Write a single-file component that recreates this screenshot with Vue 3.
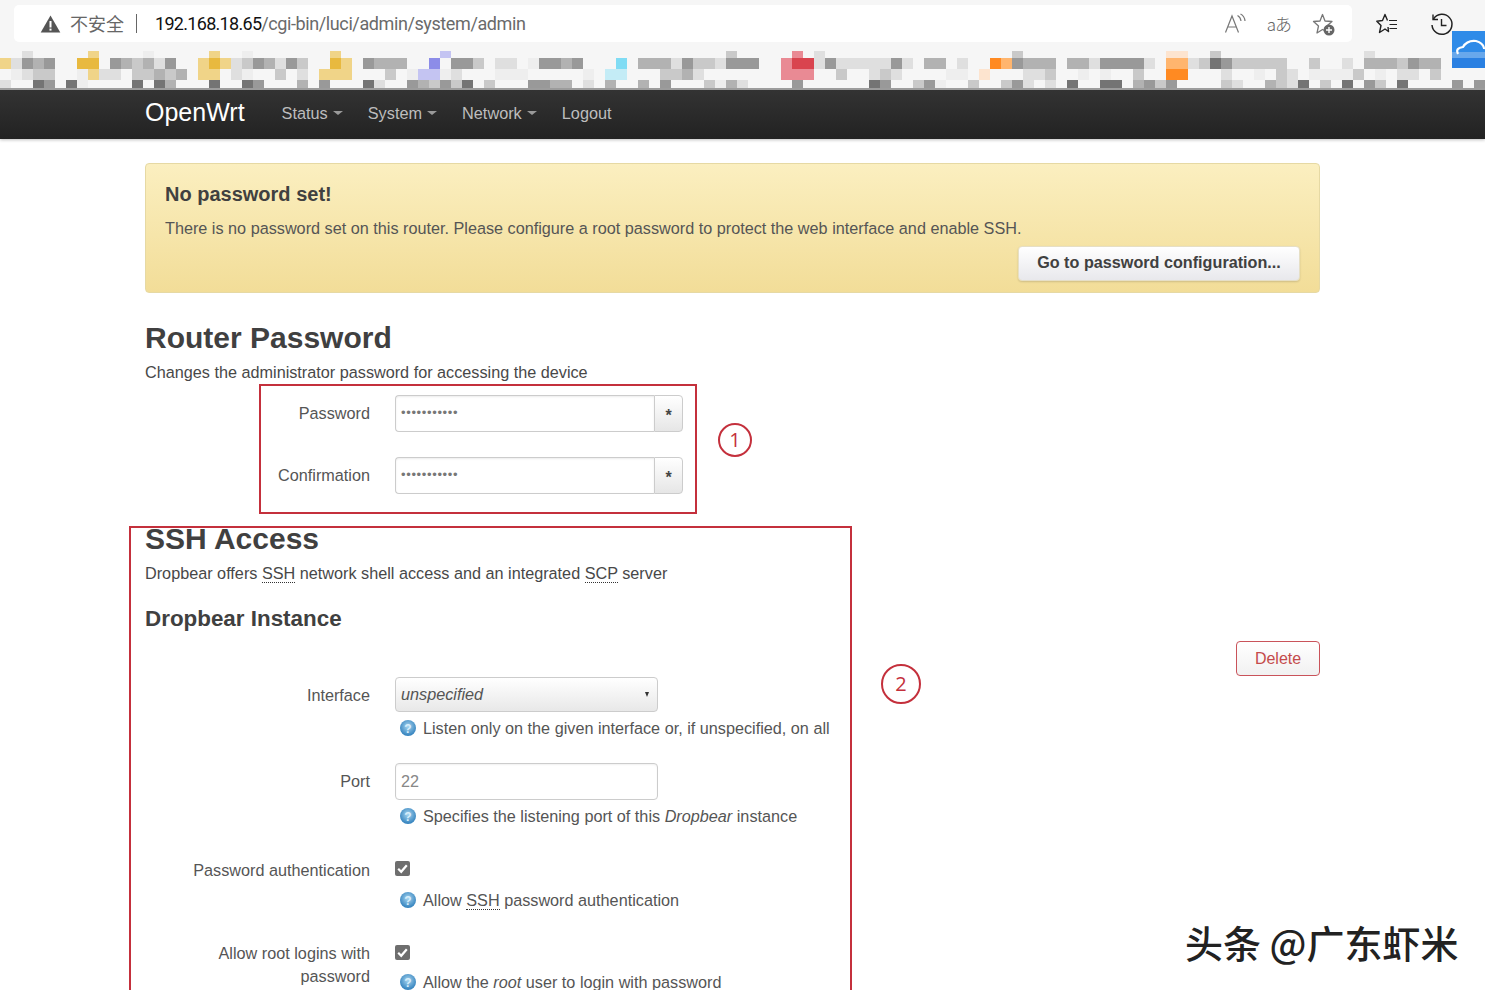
<script setup>
const palette = {
  1: '#eeeeee', 2: '#dfdfdf', 3: '#c9c9c9', 4: '#b2b2b2', 5: '#999999', 6: '#747474',
  y: '#f0d488', Y: '#e8b93f', p: '#8c8ce8', q: '#c4c4f2', c: '#80dcf4', C: '#c4ecf6',
  r: '#d9444f', R: '#e98a94', o: '#ff8a22', O: '#ffb56e', s: '#fde4cf'
}
const rowData = [
  [[2,'2'],[8,'y'],[13,'1'],[19,'y'],[22,'1'],[30,'y'],[40,'q'],[66,'3'],[72,'R'],[74,'2'],[92,'3'],[106,'ss'],[110,'3'],[124,'2']],
  [[0,'y2545'],[7,'YY'],[10,'543425'],[18,'yYy2354253'],[30,'Yy'],[33,'5444'],[39,'p'],[41,'553'],[45,'22'],[48,'15545'],[56,'c'],
   [58,'44425332555'],[71,'Rrr2522222'],[81,'52'],[84,'44'],[87,'2'],[90,'oO5444'],[97,'44255554'],[104,'2'],[106,'OO23653333'],[116,'3'],[119,'3'],[122,'2'],[124,'4443544']],
  [[1,'1233'],[7,'1y22'],[12,'33434'],[18,'yy'],[21,'21'],[25,'3'],[27,'2'],[29,'yyy'],[35,'3'],[37,'1qq12'],[45,'111'],[53,'1'],[55,'CC'],
   [60,'3342'],[71,'RRR'],[76,'3'],[79,'232'],[86,'11'],[89,'s'],[93,'223'],[98,'1'],[100,'1'],[103,'3'],[106,'oo'],[111,'2'],[114,'1'],[116,'32'],[119,'111'],[122,'13'],[125,'1'],[127,'22'],[130,'3']],
  [[0,'2'],[3,'65'],[6,'61'],[12,'6'],[14,'64'],[19,'6'],[22,'65'],[27,'4'],[29,'5'],[33,'62'],[37,'543536'],[44,'3'],[48,'5544'],[53,'2'],[55,'4'],
   [58,'4'],[60,'5'],[64,'3142'],[72,'5'],[79,'65'],[83,'351'],[88,'3'],[91,'352'],[95,'2'],[97,'6'],[100,'66'],[103,'4535'],[111,'32'],[115,'4326'],[120,'3'],[122,'6'],[124,'53'],[127,'6'],[132,'5'],[134,'5']]
]
const cells = []
const heights = [7, 11, 11, 8]
rowData.forEach((segs, r) => {
  const line = new Array(135).fill('transparent')
  segs.forEach(([start, str]) => {
    ;[...str].forEach((ch, i) => { if (palette[ch] && start + i < 135) line[start + i] = palette[ch] })
  })
  line.forEach((color, c) => cells.push({ id: r + '-' + c, color }))
})
const rowsCss = heights.map(h => h + 'px').join(' ')
</script>

<template>
  <div class="page">
    <header class="chrome">
      <div class="tabline">
        <div class="address">
          <svg class="warn" viewBox="0 0 20 18" width="21" height="18"><path d="M10 0.5 L19.8 17.5 H0.2 Z" fill="#555"/><rect x="9" y="6" width="2" height="6.5" fill="#fff"/><rect x="9" y="13.6" width="2" height="2" fill="#fff"/></svg>
          <span class="insecure">不安全</span>
          <span class="sep"></span>
          <span class="url"><b>192.168.18.65</b>/cgi-bin/luci/admin/system/admin</span>
          <span class="addr-icons">
            <svg viewBox="0 0 22 22" width="22" height="22" fill="none" stroke="#777" stroke-width="1.2"><path d="M1.5 19.5 L8 3 L14.5 19.5 M4 14 H12"/><path d="M13.5 2.5 Q16.5 4 17 8 M16.5 1 Q20.5 3 21 8"/></svg>
            <span class="aa">aあ</span>
            <svg viewBox="0 0 24 24" width="24" height="24"><path d="M10.5 2.5 L13 9 L20 9.5 L14.8 14 L16 20 L10.5 17.5 L5 21 L6.5 14 L1.5 9.5 L8 9 Z" fill="none" stroke="#777" stroke-width="1.3" stroke-linejoin="round"/><circle cx="17" cy="18" r="5.5" fill="#666"/><path d="M17 15 V21 M14 18 H20" stroke="#fff" stroke-width="1.4"/></svg>
          </span>
        </div>
        <svg class="tool fav" viewBox="0 0 24 22" width="24" height="22" fill="none" stroke="#222" stroke-width="1.4" stroke-linejoin="round"><path d="M11.5 7.5 L9 1.5 L6.5 7.5 L0.8 8.2 L5 12.5 L3.5 19.5 L9 16 L12.5 18.5 L12 14"/><path d="M13 7.5 H21 M13.5 11.5 H21 M13.5 15.5 H21" stroke-width="1.2"/></svg>
        <svg class="tool hist" viewBox="0 0 24 24" width="24" height="24" fill="none" stroke="#222" stroke-width="1.5"><path d="M3.5 6 A10 10 0 1 1 2 12"/><path d="M3 1.5 V6.5 H8" stroke-width="1.4"/><path d="M11.5 6 V12.5 H16.5" stroke-width="1.4"/></svg>
      </div>
      <div class="mosaic" :style="{ gridTemplateRows: rowsCss }">
        <i v-for="c in cells" :key="c.id" :style="{ background: c.color }"></i>
      </div>
      <div class="cloud">
        <svg viewBox="0 0 34 24" width="34" height="24" fill="none" stroke="#fff" stroke-width="2.2"><path d="M3 15 Q0 9 8 8 Q12 1 21 2 Q28 4 29 9 Q33 9 35 12"/></svg>
      </div>
    </header>

    <nav class="navbar">
      <div class="nav-inner">
        <span class="brand">OpenWrt</span>
        <span class="nav-item">Status<i class="caret"></i></span>
        <span class="nav-item">System<i class="caret"></i></span>
        <span class="nav-item">Network<i class="caret"></i></span>
        <span class="nav-item">Logout</span>
      </div>
    </nav>

    <main class="content">
      <section class="alert">
        <h4>No password set!</h4>
        <p>There is no password set on this router. Please configure a root password to protect the web interface and enable SSH.</p>
        <div class="alert-actions"><button class="btn-primary">Go to password configuration...</button></div>
      </section>

      <h2 class="h-first">Router Password</h2>
      <p class="desc">Changes the administrator password for accessing the device</p>

      <div class="row row-pw1">
        <label class="lab">Password</label>
        <div class="pw"><span class="pw-input">•••••••••••</span><span class="addon">*</span></div>
      </div>
      <div class="row row-pw2">
        <label class="lab">Confirmation</label>
        <div class="pw"><span class="pw-input">•••••••••••</span><span class="addon">*</span></div>
      </div>

      <h2 class="h-second">SSH Access</h2>
      <p class="desc">Dropbear offers <abbr>SSH</abbr> network shell access and an integrated <abbr>SCP</abbr> server</p>
      <h3>Dropbear Instance</h3>
      <div class="del-line"><button class="btn-del">Delete</button></div>

      <div class="row row-iface">
        <label class="lab">Interface</label>
        <div>
          <div class="select"><em>unspecified</em><i class="sel-arrow"></i></div>
          <div class="help">
            <svg class="q" viewBox="0 0 18 18" width="18" height="18"><defs><radialGradient id="qg" cx="50%" cy="40%" r="60%"><stop offset="0" stop-color="#a9d6f0"/><stop offset="1" stop-color="#2f7fbc"/></radialGradient></defs><circle cx="9" cy="9" r="8" fill="url(#qg)"/><text x="9" y="13.5" class="qm">?</text></svg>
            <span>Listen only on the given interface or, if unspecified, on all</span>
          </div>
        </div>
      </div>

      <div class="row row-port">
        <label class="lab">Port</label>
        <div>
          <div class="input">22</div>
          <div class="help">
            <svg class="q" viewBox="0 0 18 18" width="18" height="18"><circle cx="9" cy="9" r="8" fill="url(#qg)"/><text x="9" y="13.5" class="qm">?</text></svg>
            <span>Specifies the listening port of this <em>Dropbear</em> instance</span>
          </div>
        </div>
      </div>

      <div class="row row-auth">
        <label class="lab">Password authentication</label>
        <div>
          <svg class="check c1" viewBox="0 0 15 15" width="15" height="15"><rect width="15" height="15" rx="2" fill="#6e6e6e"/><path d="M3.2 7.8 L6.2 10.8 L11.8 4.2" fill="none" stroke="#fff" stroke-width="2.2"/></svg>
          <div class="help h1">
            <svg class="q" viewBox="0 0 18 18" width="18" height="18"><circle cx="9" cy="9" r="8" fill="url(#qg)"/><text x="9" y="13.5" class="qm">?</text></svg>
            <span>Allow <abbr>SSH</abbr> password authentication</span>
          </div>
        </div>
      </div>

      <div class="row row-root">
        <label class="lab two">Allow root logins with<br>password</label>
        <div>
          <svg class="check c2" viewBox="0 0 15 15" width="15" height="15"><rect width="15" height="15" rx="2" fill="#6e6e6e"/><path d="M3.2 7.8 L6.2 10.8 L11.8 4.2" fill="none" stroke="#fff" stroke-width="2.2"/></svg>
          <div class="help h2x">
            <svg class="q" viewBox="0 0 18 18" width="18" height="18"><circle cx="9" cy="9" r="8" fill="url(#qg)"/><text x="9" y="13.5" class="qm">?</text></svg>
            <span>Allow the <em>root</em> user to login with password</span>
          </div>
        </div>
      </div>
    </main>

    <div class="mark box1"></div>
    <div class="mark box2"></div>
    <div class="num n1">1</div>
    <div class="num n2">2</div>
    <div class="watermark">头条 @广东虾米</div>
  </div>
</template>

<style>
html, body { margin: 0; background: #fff; }
</style>

<style scoped>
.page {
  position: relative;
  height: 990px;
  width: 1485px;
  overflow: hidden;
  background: #fff;
  font-family: "Liberation Sans", Arial, sans-serif;
  font-size: 16.23px;
  line-height: 22px;
  color: #484848;
}
.chrome { background: #f6f6f6; border-bottom: 2px solid #9c9c9c; position: relative; }
.tabline { height: 51px; display: flex; align-items: flex-start; padding-left: 14px; box-sizing: border-box; }
.address {
  margin-top: 5px;
  width: 1338px;
  height: 37px;
  background: #fff;
  border-radius: 5px;
  display: flex;
  align-items: center;
  padding-left: 26px;
  box-sizing: border-box;
}
.warn { flex: none; }
.insecure { margin-left: 9px; font: 18px/37px "Noto Sans CJK SC", sans-serif; color: #666; }
.sep { width: 1px; height: 19px; background: #666; margin: 0 18px 0 12px; }
.url { font: 18px/37px Roboto, sans-serif; color: #6a6a6a; white-space: nowrap; letter-spacing: -0.4px; }
.url b { font-weight: 400; color: #111; letter-spacing: -0.7px; }
.addr-icons { margin-left: auto; display: flex; align-items: center; gap: 21px; padding-right: 16px; }
.aa { font: 300 17px/22px "Noto Sans CJK SC", sans-serif; color: #666; letter-spacing: -1px; }
.tool { flex: none; margin-top: 13px; }
.fav { margin-left: 24px; }
.hist { margin-left: 30px; }
.mosaic { display: grid; grid-template-columns: repeat(135, 11px); height: 37px; }
.mosaic i { display: block; }
.cloud {
  position: absolute;
  left: 1452px;
  top: 31px;
  width: 33px;
  height: 37px;
  background: linear-gradient(#2f8be8 0 21px, #68a8ec 21px 27px, #2a80e2 27px);
  overflow: hidden;
}
.cloud svg { position: absolute; left: 3px; top: 8px; }

.navbar {
  height: 49px;
  background: linear-gradient(#333333, #222222);
  box-shadow: 0 1px 3px rgba(0,0,0,.25);
}
.nav-inner { margin-left: 145px; display: flex; align-items: center; height: 45px; }
.brand { font-size: 25px; color: #fff; margin-right: 37px; padding-bottom: 2px; }
.nav-item { color: #bdbdbd; font-size: 16.3px; margin-right: 25px; display: flex; align-items: center; }
.caret { border-top: 4px solid #999; border-left: 5px solid transparent; border-right: 5px solid transparent; margin-left: 5px; margin-top: 1px; }

.content { margin: 0 165px 0 145px; width: 1175px; }
.alert {
  margin-top: 24px;
  height: 130px;
  box-sizing: border-box;
  padding: 19px 19px 11px;
  border: 1px solid #e6d9a4;
  border-radius: 4px;
  background: linear-gradient(#fbefc0, #f2dd98);
}
.alert h4 { margin: 0; font-size: 20px; line-height: 22px; font-weight: 700; color: #404040; }
.alert p { margin: 12px 0 0; color: #555; }
.alert-actions { display: flex; justify-content: flex-end; margin-top: 7px; }
.btn-primary {
  height: 35px;
  width: 282px;
  padding: 0 0 2px;
  font: 700 16.2px "Liberation Sans", Arial, sans-serif;
  color: #404040;
  border: 1px solid #e6dfc6;
  border-radius: 4px;
  background: linear-gradient(#ffffff, #e8e8ec);
  box-shadow: 0 1px 2px rgba(0,0,0,.15);
}
h2 { margin: 0; font-size: 30px; line-height: 40px; font-weight: 700; color: #404040; }
.h-first { margin-top: 25px; }
.h-second { margin-top: 25px; }
.desc { margin: 3px 0 0; color: #484848; }
h3 { margin: 20px 0 0; font-size: 22.4px; line-height: 30px; font-weight: 700; color: #404040; }
abbr { text-decoration: none; border-bottom: 1px dotted #333; }
.del-line { display: flex; justify-content: flex-end; margin-top: 7px; }
.btn-del {
  width: 84px;
  height: 35px;
  padding: 0;
  font: 16px "Liberation Sans", Arial, sans-serif;
  color: #c44b4b;
  background: linear-gradient(#ffffff, #f1f1f1);
  border: 1px solid #c9535a;
  border-radius: 4px;
}
.row { display: grid; grid-template-columns: 225px 1fr; column-gap: 25px; }
.lab { display: block; text-align: right; padding-top: 7px; color: #555; }
.lab.two { line-height: 23px; padding-top: 7px; }
.row-pw1 { margin-top: 12px; }
.row-pw2 { margin-top: 25px; }
.row-iface { margin-top: 1px; }
.row-port { margin-top: 24px; }
.row-auth { margin-top: 25px; }
.row-root { margin-top: 24px; }
.pw { display: flex; width: 288px; height: 37px; box-sizing: border-box; }
.pw-input {
  flex: 1;
  border: 1px solid #ccc;
  border-right: 0;
  border-radius: 4px 0 0 4px;
  box-shadow: inset 0 1px 2px rgba(0,0,0,.08);
  padding-left: 5px;
  font-size: 13px;
  line-height: 34px;
  letter-spacing: 0.65px;
  color: #777;
  background: #fff;
}
.addon {
  width: 27px;
  border: 1px solid #ccc;
  border-radius: 0 4px 4px 0;
  background: linear-gradient(#ffffff, #e6e6e6);
  text-align: center;
  font-weight: 700;
  font-size: 16px;
  line-height: 40px;
  color: #444;
}
.select {
  width: 263px;
  height: 35px;
  box-sizing: border-box;
  border: 1px solid #ccc;
  border-radius: 4px;
  background: linear-gradient(#ffffff, #e8e8e8);
  padding-left: 5px;
  line-height: 33px;
  position: relative;
  color: #555;
}
.sel-arrow {
  position: absolute;
  right: 8px;
  top: 14px;
  border-top: 5px solid #333;
  border-left: 2.5px solid transparent;
  border-right: 2.5px solid transparent;
}
.input {
  width: 263px;
  height: 37px;
  box-sizing: border-box;
  border: 1px solid #ccc;
  border-radius: 4px;
  box-shadow: inset 0 1px 2px rgba(0,0,0,.06);
  padding-left: 5px;
  line-height: 35px;
  color: #888;
}
.help { margin-top: 5px; display: flex; align-items: center; white-space: nowrap; color: #555; padding-left: 4px; height: 22px; }
.q { flex: none; margin-right: 6px; }
.qm { font: 700 12px "Liberation Sans", sans-serif; fill: #d8eefb; text-anchor: middle; }
.check { display: block; }
.c1 { margin-top: 9px; }
.c2 { margin-top: 10px; }
.h1 { margin-top: 13px; }
.h2x { margin-top: 14px; height: 16px; line-height: 16px; }

.mark { position: absolute; border: 2px solid #c4303c; box-sizing: border-box; pointer-events: none; }
.box1 { left: 259px; top: 384px; width: 438px; height: 130px; }
.box2 { left: 129px; top: 526px; width: 723px; height: 480px; }
.num {
  position: absolute;
  box-sizing: border-box;
  border: 2px solid #c4303c;
  border-radius: 50%;
  color: #c4303c;
  text-align: center;
  font-family: "Open Sans", sans-serif;
}
.n1 { left: 718px; top: 423px; width: 34px; height: 34px; line-height: 30px; font-size: 20px; }
.n2 { left: 881px; top: 664px; width: 40px; height: 40px; line-height: 36px; font-size: 20px; }
.watermark {
  position: absolute;
  left: 1185px;
  top: 919px;
  font: 500 38px/46px "Noto Sans CJK SC", sans-serif;
  color: #222;
  white-space: nowrap;
}
</style>
